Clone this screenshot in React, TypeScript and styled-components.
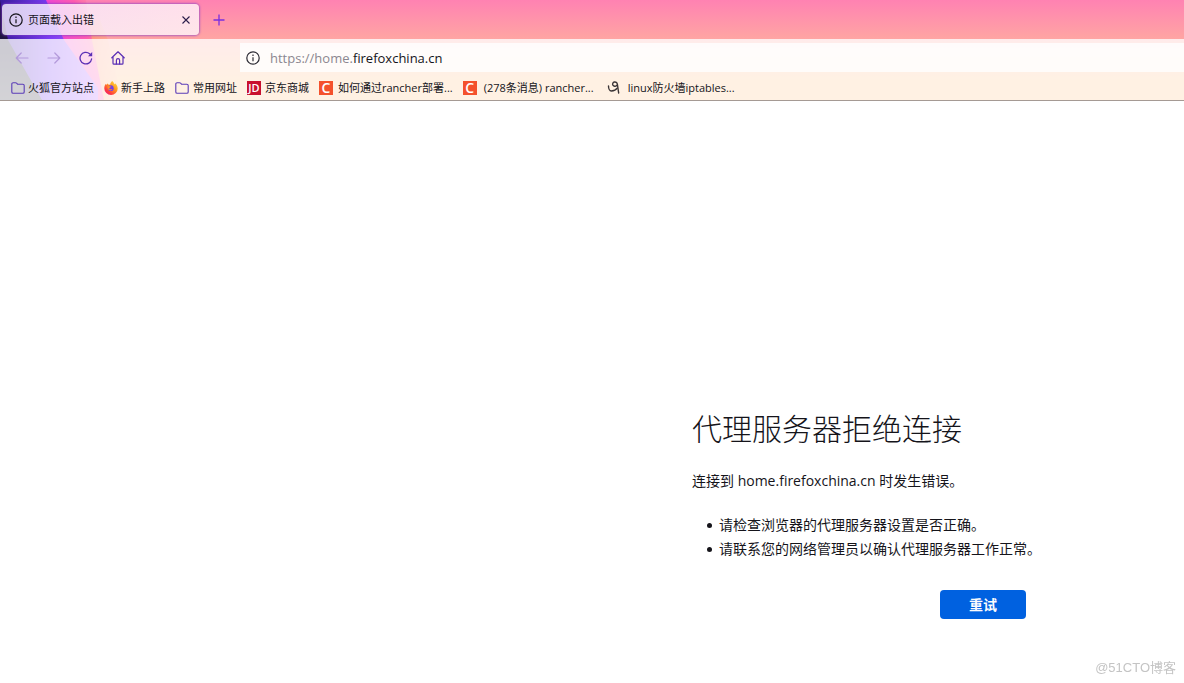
import React from "react";
import styled, { createGlobalStyle } from "styled-components";

const GlobalStyle = createGlobalStyle`
  * { box-sizing: border-box; }
  html, body { margin: 0; background: #fff; }
  body, button, input {
    font-family: "Open Sans", "Noto Sans CJK SC", sans-serif;
    color: #15141a;
  }
`;

const Page = styled.div`
  min-height: 100vh;
  display: flex;
  flex-direction: column;
`;

const Chrome = styled.header`
  position: relative;
  isolation: isolate;
  background: linear-gradient(#ff82b2 0, #ffa5a3 39px, #ffbf82 80px);
  border-bottom: 1px solid #a59a94;
`;

const ThemeArt = styled.svg`
  position: absolute;
  left: 0;
  top: 0;
  z-index: -1;
`;

const TabStrip = styled.div`
  display: flex;
  align-items: center;
  height: 39px;
  padding-left: 2px;
`;

const Tab = styled.div`
  display: flex;
  align-items: center;
  width: 197px;
  height: 31px;
  padding: 0 7px;
  gap: 5px;
  border-radius: 4px;
  background: linear-gradient(90deg, rgba(246, 238, 255, 0.82), rgba(255, 246, 250, 0.8));
  box-shadow: 0 0 2px 1px rgba(128, 60, 200, 0.6);
  font-size: 11px;
  line-height: 16px;
`;

const TabTitle = styled.span`
  flex: 1;
`;

const IconButton = styled.button`
  display: flex;
  align-items: center;
  justify-content: center;
  width: 32px;
  height: 28px;
  padding: 0;
  border: 0;
  background: none;
  color: #5b2fb5;

  &:disabled { color: #b39adb; }
`;

const CloseButton = styled(IconButton)`
  width: 12px;
  height: 20px;
  color: #2b1d4a;
`;

const NewTabButton = styled(IconButton)`
  margin-left: 4px;
  color: #7a2fe0;
`;

const Toolbars = styled.div`
  background: rgba(255, 255, 255, 0.78);
`;

const NavBar = styled.nav`
  display: flex;
  align-items: center;
  height: 37px;
  padding-left: 6px;
`;

const UrlBar = styled.label`
  display: flex;
  align-items: center;
  flex: 1;
  height: 29px;
  margin-left: 106px;
  padding-left: 6px;
  gap: 10px;
  background: rgba(255, 255, 255, 0.8);
  color: #2b2a33;
`;

const UrlField = styled.span`
  display: grid;
  flex: 1;
  font-size: 13px;
  line-height: 18px;

  & > * { grid-area: 1 / 1; }
`;

const UrlInput = styled.input`
  width: 100%;
  padding: 0;
  border: 0;
  outline: 0;
  background: none;
  font-size: 13px;
  line-height: 18px;
  color: transparent;
  caret-color: #15141a;
`;

const UrlText = styled.span`
  pointer-events: none;
  color: #8b8790;

  b { font-weight: 400; color: #15141a; }
`;

const BookmarkBar = styled.nav`
  display: flex;
  align-items: center;
  height: 24px;
  padding-left: 11px;
  gap: 10px;
`;

const Bookmark = styled.a<{ $gap?: number }>`
  display: flex;
  align-items: center;
  gap: ${(p) => p.$gap ?? 3}px;
  font-size: 11px;
  line-height: 16px;
  white-space: nowrap;
  color: #15141a;
  text-decoration: none;
`;

const Content = styled.main`
  flex: 1;
  display: flex;
  justify-content: flex-end;
  align-items: flex-end;
  padding: 0 158px 64px 0;
`;

const ErrorPanel = styled.section`
  display: flex;
  flex-direction: column;
  width: 334px;
  font-size: 14px;
  line-height: 24px;
  white-space: nowrap;
`;

const Title = styled.h1`
  margin: 0 0 18px;
  font-size: 30px;
  font-weight: 300;
  line-height: 44px;
`;

const Message = styled.p`
  margin: 0;
`;

const Tips = styled.ul`
  margin: 20px 0 29px;
  padding-left: 15px;
  list-style: none;
`;

const Tip = styled.li`
  display: flex;
  align-items: center;
  gap: 7px;

  &::before {
    content: "";
    flex: none;
    width: 5px;
    height: 5px;
    border-radius: 50%;
    background: #15141a;
  }
`;

const RetryButton = styled.button`
  align-self: flex-end;
  width: 86px;
  height: 29px;
  padding: 0;
  border: 0;
  border-radius: 4px;
  background: #0061e0;
  color: #fbfbfe;
  font-size: 14px;
  font-weight: 700;
  line-height: 20px;
`;

const Watermark = styled.footer`
  position: fixed;
  right: 8px;
  bottom: 6px;
  font-family: "Liberation Sans", "Noto Sans CJK SC", sans-serif;
  font-size: 13px;
  line-height: 18px;
  color: #c4c4c4;
`;

const InfoIcon = () => (
  <svg width="14" height="14" viewBox="0 0 14 14" fill="none" stroke="currentColor" strokeWidth="1.2">
    <circle cx="7" cy="7" r="6.2" />
    <path d="M7 6.2v4M7 3.6v1.4" />
  </svg>
);

const FolderIcon = () => (
  <svg width="14" height="14" viewBox="0 0 14 14" fill="none" stroke="#5b3cb8" strokeWidth="1.1">
    <path d="M.8 11V3a1.3 1.3 0 0 1 1.3-1.3h2.4c.5 0 .8.2 1.1.5l.9 1h5.4A1.3 1.3 0 0 1 13.2 4.5V11a1.3 1.3 0 0 1-1.3 1.3H2.1A1.3 1.3 0 0 1 .8 11z" />
  </svg>
);

const FirefoxIcon = () => (
  <svg width="14" height="14" viewBox="0 0 14 14">
    <defs>
      <linearGradient id="fox" x1="0.9" y1="0" x2="0.1" y2="1">
        <stop offset="0" stopColor="#ffe14a" />
        <stop offset="0.4" stopColor="#ff9a1f" />
        <stop offset="0.75" stopColor="#ff3b3f" />
        <stop offset="1" stopColor="#e5158a" />
      </linearGradient>
    </defs>
    <path fill="url(#fox)" d="M8.3 0c1 .8 1.5 1.7 1.7 2.5.5.3.8.5 1 .9.1-.6 0-.9 0-1.2 1.6 1.2 2.7 3.2 2.7 5.2A6.7 6.5 0 0 1 .3 7.5C.3 5.5.9 4 1.8 2.8l.3 1.1C2.7 3.1 3.3 2.8 3.7 2.6L4 3.6c.9-.2 1.6 0 2.1.3C6.2 2.3 7 .8 8.3 0z" />
    <circle cx="6.8" cy="7.2" r="2.9" fill="#7542e5" />
    <path fill="#ff8a2a" d="M3.5 5.2c1.2-.6 2.6-.3 3.6.5L5.6 6.9c-.7.4-.4 1.3.5 1.4 1 .1 1.5-.5 2.3-.2-.5 1.2-2.1 1.7-3.3 1-1.3-.7-1.9-2.3-1.6-3.9z" />
  </svg>
);

const BadgeIcon = styled.span<{ $color: string; $size: number }>`
  display: flex;
  align-items: center;
  justify-content: center;
  width: 14px;
  height: 14px;
  background: ${(p) => p.$color};
  color: #fff;
  font-family: "Open Sans", sans-serif;
  font-size: ${(p) => p.$size}px;
  font-weight: 600;
  line-height: 14px;
`;

const ScribbleIcon = () => (
  <svg width="18" height="14" viewBox="0 0 18 14" fill="none" stroke="#3a3436" strokeWidth="1.4" strokeLinecap="round" strokeLinejoin="round">
    <path d="M4.500 5c0 2.500 1.200 5 2.800 5 2.500 0 4.800-1 5.900-2.800" />
    <path d="M13.300 3c-.2-1.500-1.500-2.300-2.900-2-1.500.4-2.200 1.900-1.500 3.200.8 1.300 2.700 1.500 3.800.3.500-.5.700-1 .6-1.500.6 3 .8 6 1.400 9" />
  </svg>
);

export default function App() {
  return (
    <Page>
      <GlobalStyle />
      <Chrome>
        <ThemeArt width="130" height="100" viewBox="0 0 130 100" aria-hidden="true">
          <defs>
            <linearGradient id="violet" x1="0" x2="1">
              <stop offset="0" stopColor="#3a1c9c" />
              <stop offset="0.5" stopColor="#7a3cf4" />
              <stop offset="1" stopColor="#b868ff" />
            </linearGradient>
            <linearGradient id="rose" gradientUnits="userSpaceOnUse" x1="50" y1="40" x2="106" y2="20">
              <stop offset="0" stopColor="#e840e0" />
              <stop offset="0.6" stopColor="#ff5cae" />
              <stop offset="1" stopColor="#ff8a98" stopOpacity="0" />
            </linearGradient>
            <linearGradient id="amber" x1="0" x2="1">
              <stop offset="0" stopColor="#ff8f78" />
              <stop offset="1" stopColor="#ffae88" stopOpacity="0.3" />
            </linearGradient>
            <linearGradient id="night" x1="0" y1="0" x2="0" y2="1">
              <stop offset="0" stopColor="#2a0f5c" />
              <stop offset="0.5" stopColor="#1d1838" />
              <stop offset="1" stopColor="#3a3848" />
            </linearGradient>
          </defs>
          <path fill="url(#amber)" d="M84 20H100L108 40L122 100H98z" />
          <path fill="url(#rose)" d="M40 0H86L92 40L104 100H40z" />
          <path fill="url(#violet)" d="M0 0H46L64 40L98 88V100H0z" />
          <path fill="url(#night)" d="M0 0L8 40L42 100H0z" />
        </ThemeArt>
        <TabStrip>
          <Tab>
            <InfoIcon />
            <TabTitle>页面载入出错</TabTitle>
            <CloseButton aria-label="关闭标签页">
              <svg width="8" height="8" viewBox="0 0 8 8" stroke="currentColor" strokeWidth="1.1"><path d="M.5.5l7 7M7.5.5l-7 7" /></svg>
            </CloseButton>
          </Tab>
          <NewTabButton aria-label="新建标签页">
            <svg width="12" height="12" viewBox="0 0 12 12" stroke="currentColor" strokeWidth="1.3"><path d="M6 .5v11M.5 6h11" /></svg>
          </NewTabButton>
        </TabStrip>
        <Toolbars>
          <NavBar aria-label="导航">
            <IconButton disabled aria-label="后退">
              <svg width="14" height="14" viewBox="0 0 14 14" fill="none" stroke="currentColor" strokeWidth="1.2" strokeLinecap="round" strokeLinejoin="round"><path d="M13 7H1.2M6.2 2L1.2 7l5 5" /></svg>
            </IconButton>
            <IconButton disabled aria-label="前进">
              <svg width="14" height="14" viewBox="0 0 14 14" fill="none" stroke="currentColor" strokeWidth="1.2" strokeLinecap="round" strokeLinejoin="round"><path d="M1 7h11.8M7.8 2l5 5-5 5" /></svg>
            </IconButton>
            <IconButton aria-label="重新载入">
              <svg width="14" height="14" viewBox="0 0 14 14" fill="none" stroke="currentColor" strokeWidth="1.3" strokeLinecap="round"><path d="M12.6 8A5.8 5.8 0 1 1 10.6 2.7L12 4" /><path d="M13.2 1v4.2H9z" fill="currentColor" stroke="none" /></svg>
            </IconButton>
            <IconButton aria-label="主页">
              <svg width="14" height="14" viewBox="0 0 14 14" fill="none" stroke="currentColor" strokeWidth="1.2" strokeLinecap="round" strokeLinejoin="round"><path d="M.8 6.8L7 .8l6.2 6M2 6v6.2c0 .6.3.9.9.9h8.2c.6 0 .9-.3.9-.9V6" /><path d="M5.4 13V9.2a1.6 1.6 0 0 1 3.2 0V13" /></svg>
            </IconButton>
            <UrlBar>
              <InfoIcon />
              <UrlField>
                <UrlText aria-hidden="true">https://home.<b>firefoxchina.cn</b></UrlText>
                <UrlInput aria-label="网址" />
              </UrlField>
            </UrlBar>
          </NavBar>
          <BookmarkBar aria-label="书签">
            <Bookmark href="#"><FolderIcon />火狐官方站点</Bookmark>
            <Bookmark href="#"><FirefoxIcon />新手上路</Bookmark>
            <Bookmark href="#" $gap={4}><FolderIcon />常用网址</Bookmark>
            <Bookmark href="#" $gap={4}><BadgeIcon $color="#c8102e" $size={11}>JD</BadgeIcon>京东商城</Bookmark>
            <Bookmark href="#" $gap={5}><BadgeIcon $color="#f4512c" $size={14}>C</BadgeIcon>如何通过rancher部署...</Bookmark>
            <Bookmark href="#" $gap={7}><BadgeIcon $color="#f4512c" $size={14}>C</BadgeIcon>(278条消息) rancher...</Bookmark>
            <Bookmark href="#" $gap={6}><ScribbleIcon />linux防火墙iptables...</Bookmark>
          </BookmarkBar>
        </Toolbars>
      </Chrome>
      <Content>
        <ErrorPanel>
          <Title>代理服务器拒绝连接</Title>
          <Message>连接到 home.firefoxchina.cn 时发生错误。</Message>
          <Tips>
            <Tip>请检查浏览器的代理服务器设置是否正确。</Tip>
            <Tip>请联系您的网络管理员以确认代理服务器工作正常。</Tip>
          </Tips>
          <RetryButton>重试</RetryButton>
        </ErrorPanel>
      </Content>
      <Watermark>@51CTO博客</Watermark>
    </Page>
  );
}
